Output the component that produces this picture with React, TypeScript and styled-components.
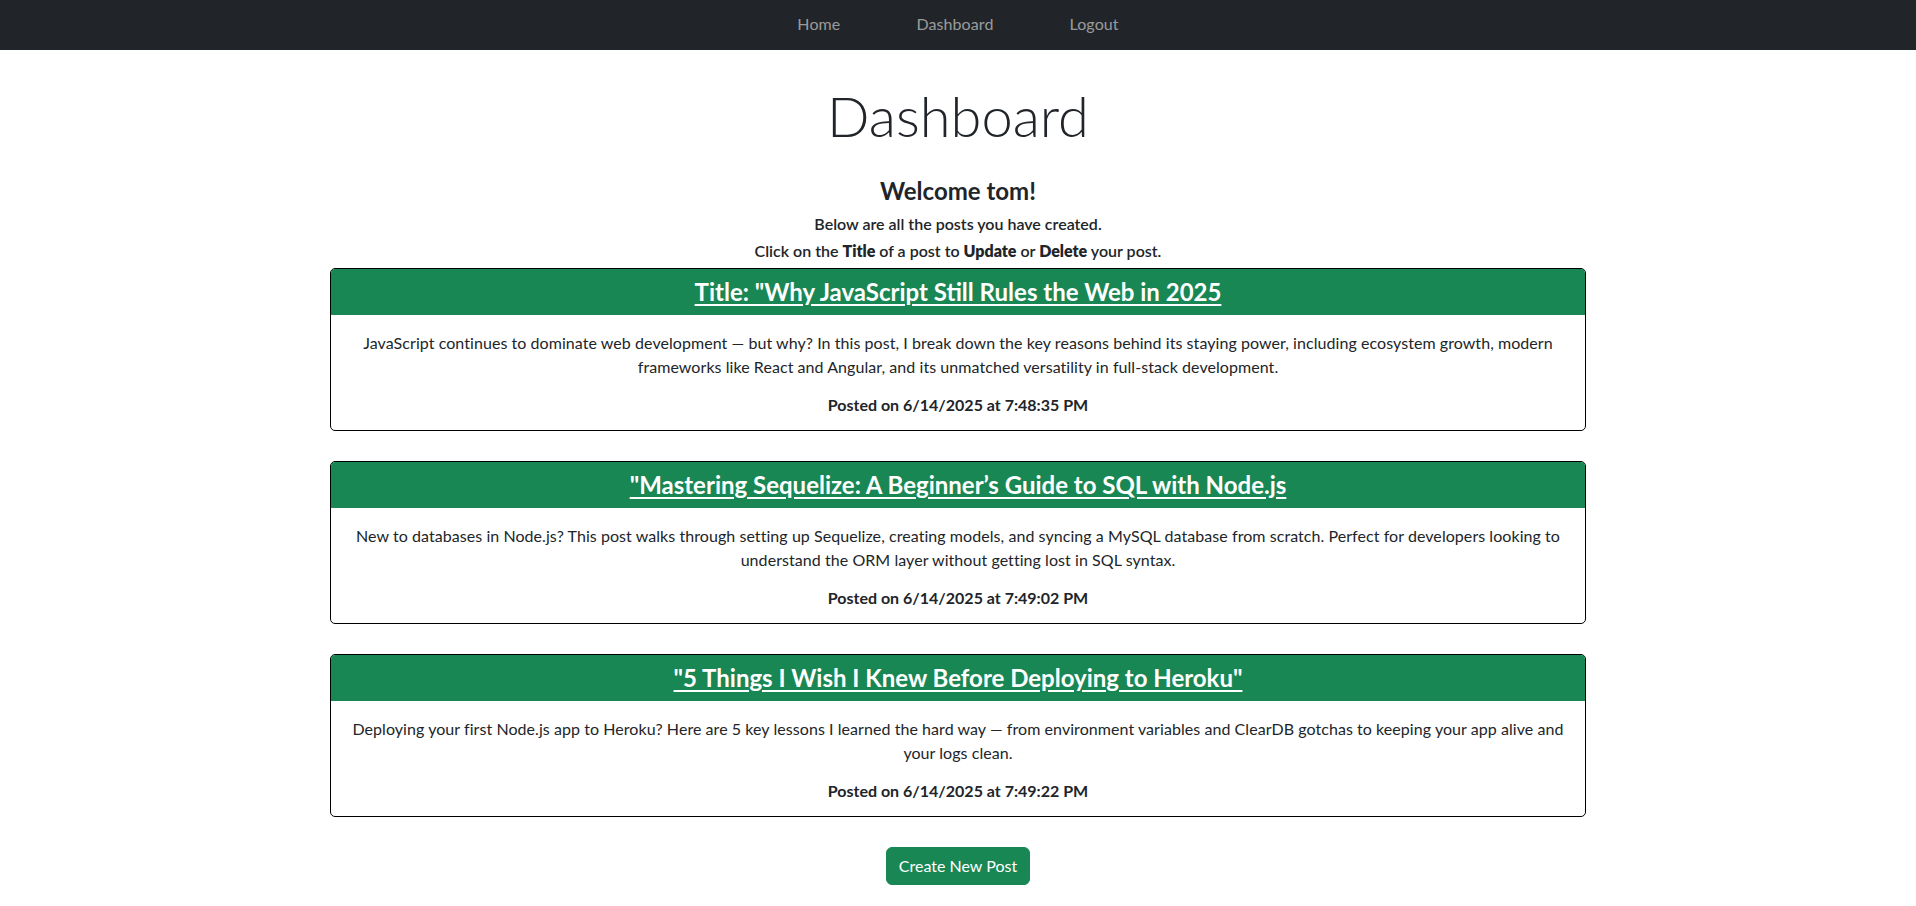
import * as React from "react";
import styled, { createGlobalStyle } from "styled-components";

// Global
const GlobalStyle = createGlobalStyle`
  * {
    box-sizing: border-box;
  }

  body {
    margin: 0;
    font-family: Lato, "Liberation Sans", sans-serif;
    font-size: 16px;
    line-height: 1.5;
    color: #212529;
    background: #fff;
  }
`;

interface Post {
  id: number;
  title: string;
  content: string;
  posted: string;
}

const posts: Post[] = [
  {
    id: 1,
    title: 'Title: "Why JavaScript Still Rules the Web in 2025',
    content:
      "JavaScript continues to dominate web development — but why? In this post, I break down the key reasons behind its staying power, including ecosystem growth, modern frameworks like React and Angular, and its unmatched versatility in full-stack development.",
    posted: "6/14/2025 at 7:48:35 PM",
  },
  {
    id: 2,
    title: '"Mastering Sequelize: A Beginner’s Guide to SQL with Node.js',
    content:
      "New to databases in Node.js? This post walks through setting up Sequelize, creating models, and syncing a MySQL database from scratch. Perfect for developers looking to understand the ORM layer without getting lost in SQL syntax.",
    posted: "6/14/2025 at 7:49:02 PM",
  },
  {
    id: 3,
    title: '"5 Things I Wish I Knew Before Deploying to Heroku"',
    content:
      "Deploying your first Node.js app to Heroku? Here are 5 key lessons I learned the hard way — from environment variables and ClearDB gotchas to keeping your app alive and your logs clean.",
    posted: "6/14/2025 at 7:49:22 PM",
  },
];

const App = () => {
  return (
    <>
      <GlobalStyle />
      <Navbar>
        <NavLink href="#">Home</NavLink>
        <NavLink href="#">Dashboard</NavLink>
        <NavLink href="#">Logout</NavLink>
      </Navbar>

      <Main>
        <PageTitle>Dashboard</PageTitle>
        <Welcome>Welcome tom!</Welcome>
        <Note>Below are all the posts you have created.</Note>
        <Note>
          Click on the <strong>Title</strong> of a post to <strong>Update</strong> or <strong>Delete</strong> your
          post.
        </Note>

        {posts.map((post) => (
          <Card key={post.id}>
            <CardHeader>
              <CardTitle href="#">{post.title}</CardTitle>
            </CardHeader>
            <CardBody>
              <Content>{post.content}</Content>
              <Posted>Posted on {post.posted}</Posted>
            </CardBody>
          </Card>
        ))}

        <CreateButton type="button">Create New Post</CreateButton>
      </Main>
    </>
  );
};

const Navbar = styled.nav`
  height: 50px;
  padding-bottom: 2px;
  background: #212529;
  display: flex;
  align-items: center;
  justify-content: center;
  gap: 76px;
`;

const NavLink = styled.a`
  color: rgba(255, 255, 255, 0.55);
  text-decoration: none;
  font-size: 16px;
  line-height: 24px;
  letter-spacing: 0.1px;
`;

const Main = styled.main`
  width: 1256px;
  margin: 0 auto;
  display: flex;
  flex-direction: column;
  align-items: center;
  text-align: center;
  padding-bottom: 20px;
`;

const PageTitle = styled.h1`
  margin: 32px 0 28px;
  font-size: 56px;
  font-weight: 300;
  line-height: 1.2;
`;

const Welcome = styled.h4`
  margin: 0 0 8px;
  font-size: 24px;
  font-weight: 700;
  line-height: 1.2;
`;

const Note = styled.h6`
  margin: 0 0 8px;
  font-size: 16px;
  font-weight: 600;
  line-height: 1.2;

  strong {
    font-weight: 800;
  }
`;

const Card = styled.section`
  width: 100%;
  margin-bottom: 30px;
  border: 1px solid #000;
  border-radius: 5px;
  overflow: hidden;
`;

const CardHeader = styled.div`
  background: #198754;
  padding: 8.5px 16px;
`;

const CardTitle = styled.a`
  color: #fff;
  font-size: 24px;
  font-weight: 700;
  line-height: 1.2;
  text-decoration: underline;
  text-underline-offset: 3px;
`;

const CardBody = styled.div`
  padding: 16px 16px 13px;
`;

const Content = styled.p`
  margin: 0 0 14px;
  letter-spacing: 0.06px;
`;

const Posted = styled.p`
  margin: 0;
  font-weight: 700;
`;

const CreateButton = styled.button`
  background: #198754;
  color: #fff;
  border: 1px solid #198754;
  border-radius: 6px;
  padding: 6px 12px;
  font-family: inherit;
  font-size: 16px;
  line-height: 24px;
  cursor: pointer;
`;

export default App;
